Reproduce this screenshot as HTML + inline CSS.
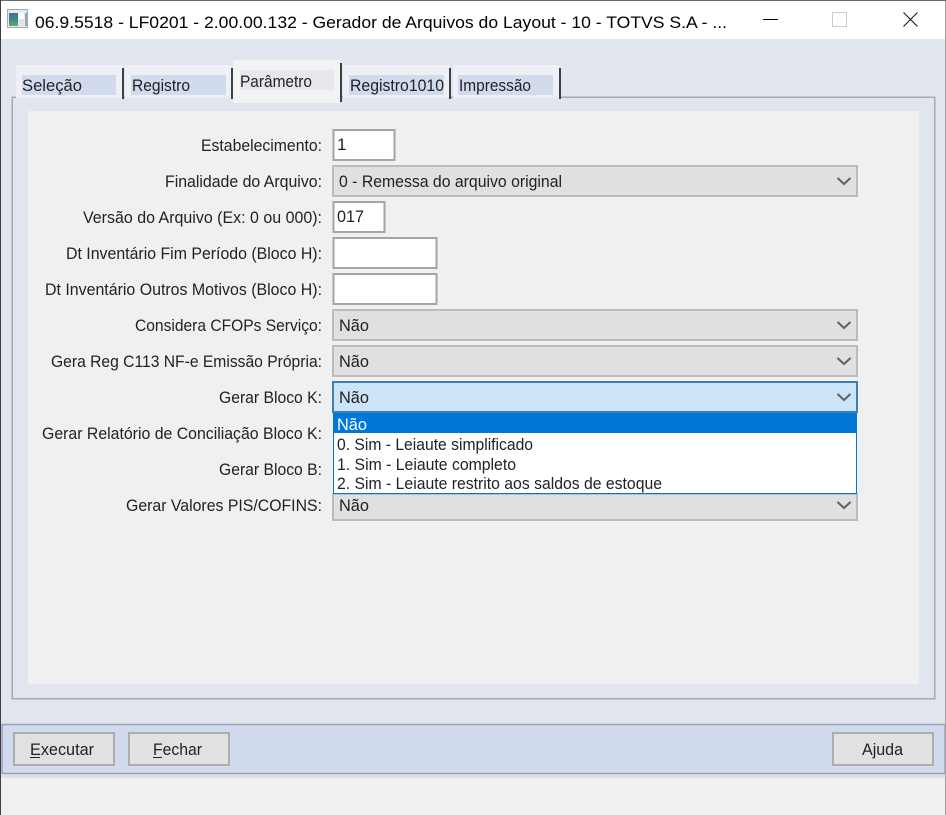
<!DOCTYPE html>
<html lang="pt">
<head>
<meta charset="utf-8">
<title>Gerador de Arquivos do Layout</title>
<style>
html,body{margin:0;padding:0;width:946px;height:815px;overflow:hidden;background:#f0f0f0}
svg{display:block}
text{font-family:"Liberation Sans",sans-serif;font-size:17px;fill:#222;white-space:pre;filter:blur(.25px)}
.i{fill:#fff;stroke:#a5a5a5;stroke-width:2}
.s{fill:#e0e0e0;stroke:#bcbcbc;stroke-width:2}
.b{fill:#e1e1e1;stroke:#adadad;stroke-width:2}
.d{fill:#3a4148}
.c{fill:none;stroke:#606060;stroke-width:2}
</style>
</head>
<body>
<svg width="946" height="815" viewBox="0 0 946 815" xmlns="http://www.w3.org/2000/svg">
<defs>
<linearGradient id="g" x1="0" y1="0" x2="0" y2="1">
<stop offset="0" stop-color="#3f6f9c"/>
<stop offset=".55" stop-color="#3f8c84"/>
<stop offset="1" stop-color="#5fae6a"/>
</linearGradient>
</defs>
<rect width="946" height="815" fill="#f0f0f0"/>
<!-- main bg -->
<rect x="1" y="39" width="944" height="739" fill="#e1e5ee"/>
<!-- title bar -->
<rect x="1" y="1" width="944" height="38" fill="#fff"/>
<rect width="946" height="1" fill="#6a6a6a"/>
<rect width="1" height="815" fill="#3a4048"/>
<rect x="945" y="1" width="1" height="814" fill="#a0a0a0"/>
<!-- app icon -->
<rect x="7.5" y="9.5" width="20" height="18" fill="#e6e9ee" stroke="#a8a8a8"/>
<rect x="9" y="13" width="9" height="13" fill="url(#g)"/>
<rect x="19" y="13" width="5" height="6" fill="#fff"/>
<rect x="19" y="19" width="5" height="7" fill="#dfe3ea"/>
<rect x="25" y="13" width="2" height="13" fill="#9aa4b2"/>
<text x="35" y="28" textLength="692" lengthAdjust="spacingAndGlyphs" style="fill:#000">06.9.5518 - LF0201 - 2.00.00.132 - Gerador de Arquivos do Layout - 10 - TOTVS S.A - ...</text>
<!-- window buttons -->
<rect x="763" y="19" width="15" height="1" fill="#000"/>
<rect x="832.5" y="12.5" width="14" height="14" fill="none" stroke="#ccc"/>
<path d="M903.5 12.5L917.5 26.5M917.5 12.5L903.5 26.5" stroke="#111" fill="none"/>
<!-- panel -->
<rect x="12.25" y="97.25" width="922.5" height="601.5" fill="#e1e5ee" stroke="#a3abb9" stroke-width="1.5"/>
<rect x="28" y="111" width="891" height="573" fill="#f0f0f0"/>
<!-- tabs -->
<rect x="16" y="65" width="107" height="33" fill="#eef0f5"/>
<rect x="22" y="75" width="94" height="20" fill="#d2dbee"/>
<rect x="122" y="68" width="2" height="31" class="d"/>
<rect x="125" y="65" width="106" height="33" fill="#eef0f5"/>
<rect x="131" y="75" width="95" height="20" fill="#d2dbee"/>
<rect x="231" y="68" width="2" height="31" class="d"/>
<rect x="233" y="60" width="107" height="43" fill="#f3f3f3"/>
<rect x="240" y="70" width="94" height="20" fill="#e6e8ee"/>
<rect x="340" y="63" width="2" height="39" class="d"/>
<rect x="343" y="65" width="106" height="33" fill="#eef0f5"/>
<rect x="349" y="75" width="95" height="20" fill="#d2dbee"/>
<rect x="449" y="68" width="2" height="31" class="d"/>
<rect x="453" y="65" width="106" height="33" fill="#eef0f5"/>
<rect x="458" y="75" width="95" height="20" fill="#d2dbee"/>
<rect x="559" y="68" width="2" height="31" class="d"/>
<text x="22" y="91" textLength="60" lengthAdjust="spacingAndGlyphs">Seleção</text>
<text x="132" y="91" textLength="58" lengthAdjust="spacingAndGlyphs">Registro</text>
<text x="240" y="87" textLength="72" lengthAdjust="spacingAndGlyphs">Parâmetro</text>
<text x="350" y="91" textLength="94" lengthAdjust="spacingAndGlyphs">Registro1010</text>
<text x="459" y="91" textLength="72" lengthAdjust="spacingAndGlyphs">Impressão</text>
<!-- labels -->
<text x="201" y="151" textLength="121" lengthAdjust="spacingAndGlyphs">Estabelecimento:</text>
<text x="165" y="187" textLength="157" lengthAdjust="spacingAndGlyphs">Finalidade do Arquivo:</text>
<text x="83" y="223" textLength="239" lengthAdjust="spacingAndGlyphs">Versão do Arquivo (Ex: 0 ou 000):</text>
<text x="66" y="259" textLength="256" lengthAdjust="spacingAndGlyphs">Dt Inventário Fim Período (Bloco H):</text>
<text x="45" y="295" textLength="277" lengthAdjust="spacingAndGlyphs">Dt Inventário Outros Motivos (Bloco H):</text>
<text x="135" y="331" textLength="187" lengthAdjust="spacingAndGlyphs">Considera CFOPs Serviço:</text>
<text x="51" y="367" textLength="271" lengthAdjust="spacingAndGlyphs">Gera Reg C113 NF-e Emissão Própria:</text>
<text x="219" y="403" textLength="103" lengthAdjust="spacingAndGlyphs">Gerar Bloco K:</text>
<text x="42" y="439" textLength="280" lengthAdjust="spacingAndGlyphs">Gerar Relatório de Conciliação Bloco K:</text>
<text x="219" y="475" textLength="103" lengthAdjust="spacingAndGlyphs">Gerar Bloco B:</text>
<text x="126" y="511" textLength="196" lengthAdjust="spacingAndGlyphs">Gerar Valores PIS/COFINS:</text>
<!-- inputs -->
<rect x="333.5" y="130" width="61" height="30" class="i"/>
<text x="337" y="150">1</text>
<rect x="333" y="166" width="524" height="30" class="s"/>
<text x="339" y="187" textLength="223" lengthAdjust="spacingAndGlyphs">0 - Remessa do arquivo original</text>
<path d="M837.5 178l6.5 6 6.5-6" class="c"/>
<rect x="333.5" y="202" width="51" height="30" class="i"/>
<text x="337" y="222" textLength="27" lengthAdjust="spacingAndGlyphs">017</text>
<rect x="333.5" y="238" width="103" height="30" class="i"/>
<rect x="333.5" y="274" width="103" height="30" class="i"/>
<rect x="333" y="310" width="524" height="30" class="s"/>
<text x="339" y="331" textLength="30" lengthAdjust="spacingAndGlyphs">Não</text>
<path d="M837.5 322l6.5 6 6.5-6" class="c"/>
<rect x="333" y="346" width="524" height="30" class="s"/>
<text x="339" y="367" textLength="30" lengthAdjust="spacingAndGlyphs">Não</text>
<path d="M837.5 358l6.5 6 6.5-6" class="c"/>
<rect x="333" y="382" width="524" height="30" fill="#cce4f7" stroke="#3d7fb5" stroke-width="2"/>
<text x="339" y="403" textLength="30" lengthAdjust="spacingAndGlyphs">Não</text>
<path d="M837.5 394l6.5 6 6.5-6" class="c"/>
<rect x="333" y="494" width="524" height="26" class="s"/>
<text x="339" y="511" textLength="30" lengthAdjust="spacingAndGlyphs">Não</text>
<path d="M837.5 502l6.5 6 6.5-6" class="c"/>
<!-- dropdown -->
<rect x="333" y="413" width="524" height="81" fill="#0078d7"/>
<rect x="334" y="433" width="522" height="60" fill="#fff"/>
<text x="337" y="430" textLength="30" lengthAdjust="spacingAndGlyphs" style="fill:#fff">Não</text>
<text x="337" y="450" textLength="196" lengthAdjust="spacingAndGlyphs">0. Sim - Leiaute simplificado</text>
<text x="337" y="470" textLength="179" lengthAdjust="spacingAndGlyphs">1. Sim - Leiaute completo</text>
<text x="337" y="489" textLength="325" lengthAdjust="spacingAndGlyphs">2. Sim - Leiaute restrito aos saldos de estoque</text>
<!-- bottom bar -->
<rect x="2" y="724.5" width="943" height="49" fill="#d2dbee" stroke="#9aa2b2" stroke-width="1.5"/>
<rect x="1" y="775" width="944" height="3" fill="#dfdfdf"/>
<rect x="14" y="733" width="100" height="32" class="b"/>
<text x="30" y="755" textLength="64" lengthAdjust="spacingAndGlyphs">Executar</text>
<rect x="30" y="757" width="10" height="1" fill="#222"/>
<rect x="129" y="733" width="100" height="32" class="b"/>
<text x="153" y="755" textLength="49" lengthAdjust="spacingAndGlyphs">Fechar</text>
<rect x="153" y="757" width="9" height="1" fill="#222"/>
<rect x="833" y="733" width="100" height="32" class="b"/>
<text x="862" y="755" textLength="41" lengthAdjust="spacingAndGlyphs">Ajuda</text>
</svg>
</body>
</html>
